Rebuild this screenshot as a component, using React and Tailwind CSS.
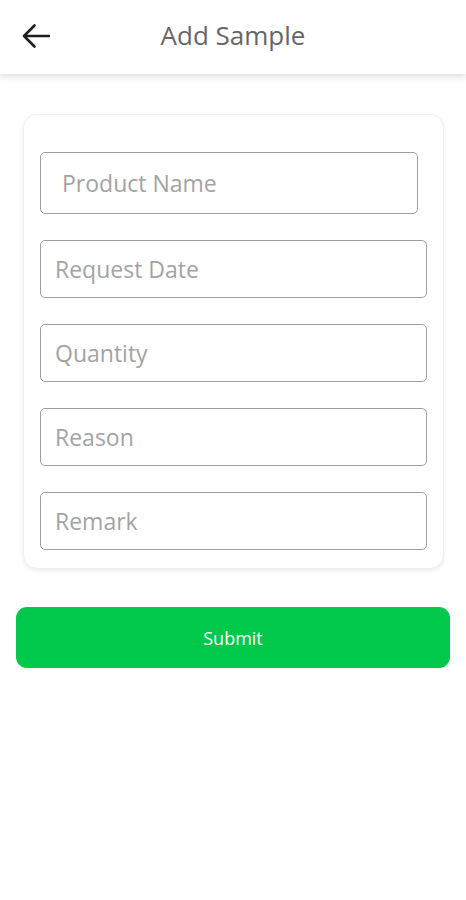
import React from "react";

function Field({ placeholder, className = "" }) {
  return (
    <div
      className={`flex items-center rounded-[5px] border border-[#9e9e9e] bg-white text-[23px] leading-none text-[#a3a3a3] ${className}`}
    >
      {placeholder}
    </div>
  );
}

export default function App() {
  return (
    <div
      className="min-h-[900px] w-[466px] bg-white"
      style={{ fontFamily: '"Open Sans", "Noto Sans", sans-serif' }}
    >
      <header className="relative flex h-[74px] items-center bg-white shadow-[0_3px_6px_rgba(0,0,0,0.12)]">
        <div className="absolute left-[22px] top-[24px]">
          <svg width="28" height="24" viewBox="0 0 28 24" fill="none">
            <path
              d="M27 12H2M12.5 1.5L2 12l10.5 10.5"
              stroke="#1f1f1f"
              strokeWidth="2.6"
              strokeLinecap="round"
              strokeLinejoin="round"
            />
          </svg>
        </div>
        <h1 className="-mt-[5px] w-full text-center text-[26px] leading-none text-[#666666]">
          Add Sample
        </h1>
      </header>

      <div className="px-[23px] pt-[40px] pr-[22px]">
        <div className="flex flex-col gap-[26px] rounded-[14px] border border-[#f0f0f0] bg-white px-[16px] pt-[37px] pb-[18px] shadow-[0_2px_4px_rgba(0,0,0,0.08)]">
          <Field placeholder="Product Name" className="mr-[9px] h-[62px] pl-[21px]" />
          <Field placeholder="Request Date" className="h-[58px] pl-[14px]" />
          <Field placeholder="Quantity" className="h-[58px] pl-[14px]" />
          <Field placeholder="Reason" className="h-[58px] pl-[14px]" />
          <Field placeholder="Remark" className="h-[58px] pl-[14px]" />
        </div>
      </div>

      <div className="px-[16px] pt-[38px]">
        <button className="flex h-[61px] w-[434px] items-center justify-center rounded-[11px] bg-[#00c84a] text-[18px] leading-none text-white">
          Submit
        </button>
      </div>
    </div>
  );
}
